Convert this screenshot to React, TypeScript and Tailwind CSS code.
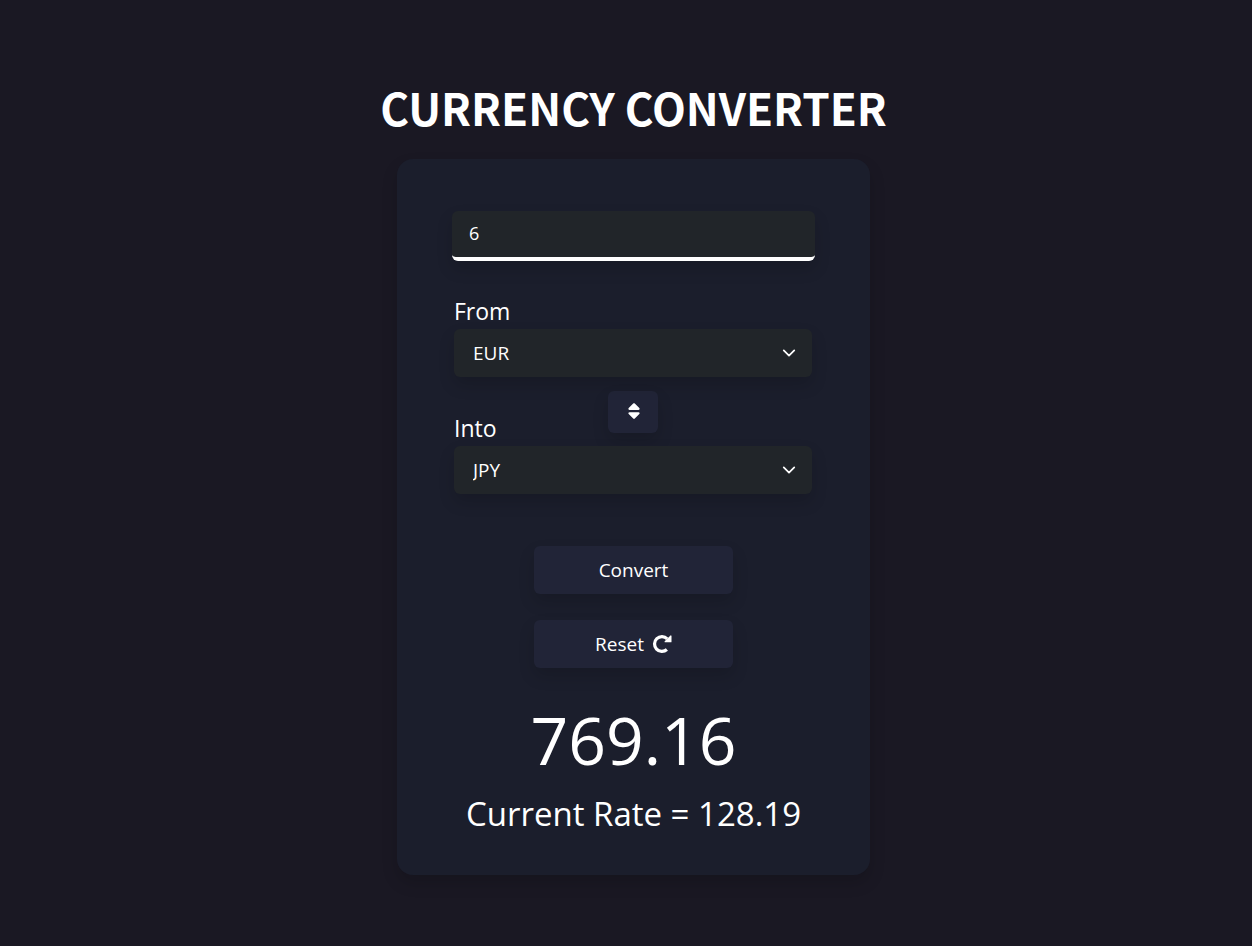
import { useState } from "react";
import { FaSort } from "react-icons/fa6";

const RATES: Record<string, number> = { EUR: 1, JPY: 128.19, USD: 1.13, GBP: 0.84 };
const CODES = Object.keys(RATES);

function Chevron() {
  return (
    <svg
      viewBox="0 0 16 16"
      className="pointer-events-none absolute right-4 size-3.5"
      fill="none"
      stroke="currentColor"
      strokeWidth="2"
      strokeLinecap="round"
      strokeLinejoin="round"
      aria-hidden="true"
    >
      <path d="M2 5l6 6 6-6" />
    </svg>
  );
}

function ResetIcon() {
  return (
    <svg viewBox="0 0 20 20" className="size-5" aria-hidden="true">
      <path
        d="M14.9 15.5A7.4 7.4 0 1 1 15.2 4.8"
        fill="none"
        stroke="currentColor"
        strokeWidth="3.2"
      />
      <path d="M19.5 2v5.8a.5.5 0 0 1-.5.5h-5.9a.6.6 0 0 1-.4-1l5.8-5.8a.6.6 0 0 1 1 .5z" fill="currentColor" />
    </svg>
  );
}

type CurrencySelectProps = {
  id: string;
  value: string;
  onChange: (code: string) => void;
};

function CurrencySelect({ id, value, onChange }: CurrencySelectProps) {
  return (
    <div className="relative flex items-center">
      <select
        id={id}
        value={value}
        onChange={(e) => onChange(e.target.value)}
        className="h-12 w-full appearance-none rounded-md bg-[#212529] px-[19px] text-[19px] text-white shadow-[0_8px_16px_rgba(0,0,0,0.15)] outline-none"
      >
        {CODES.map((code) => (
          <option key={code}>{code}</option>
        ))}
      </select>
      <Chevron />
    </div>
  );
}

const actionClass =
  "flex h-12 w-full items-center justify-center gap-2 rounded-md bg-[#212437] text-[19px] shadow-[0_8px_16px_rgba(0,0,0,0.15)]";

export default function App() {
  const [amount, setAmount] = useState("6");
  const [from, setFrom] = useState("EUR");
  const [into, setInto] = useState("JPY");
  const [result, setResult] = useState({ total: "769.16", rate: "128.19" });

  const convert = () => {
    const rate = RATES[into] / RATES[from];
    setResult({ total: (Number(amount) * rate).toFixed(2), rate: rate.toFixed(2) });
  };
  const swap = () => {
    setFrom(into);
    setInto(from);
  };
  const reset = () => {
    setAmount("");
    setResult({ total: "0.00", rate: "0.00" });
  };

  return (
    <main className="flex min-h-screen flex-col items-center bg-[#1a1823] pt-20 pb-[71px] pl-[15px] font-['Open_Sans',sans-serif] text-white">
      <h1 className="mb-[25px] text-center font-['Noto_Sans_CJK_JP',sans-serif] text-[44px] leading-[54px] font-bold">
        CURRENCY CONVERTER
      </h1>

      <section className="flex w-full max-w-[473px] flex-col items-center rounded-2xl bg-[#1b1e2c] px-[55px] pt-[52px] pb-9 shadow-[0_8px_16px_rgba(0,0,0,0.15)]">
        <input
          type="text"
          inputMode="decimal"
          aria-label="Amount"
          value={amount}
          onChange={(e) => setAmount(e.target.value)}
          className="h-[50px] w-full rounded-md border-b-4 border-white bg-[#212529] px-[17px] pb-0.5 text-lg shadow-[0_8px_16px_rgba(0,0,0,0.15)] outline-none"
        />

        <div className="mt-8 flex w-full flex-col pr-[3px] pl-0.5">
          <label htmlFor="from" className="text-[23px] leading-9">
            From
          </label>
          <CurrencySelect id="from" value={from} onChange={setFrom} />
          <div className="grid grid-cols-[1fr_50px_1fr] pt-3.5">
            <label htmlFor="into" className="self-end text-[23px] leading-9">
              Into
            </label>
            <button
              type="button"
              onClick={swap}
              aria-label="Swap currencies"
              className="mb-[13px] flex h-[42px] items-center justify-center rounded-md bg-[#212437] pb-0.5 pl-0.5 shadow-[0_8px_16px_rgba(0,0,0,0.15)]"
            >
              <FaSort className="size-[18px]" />
            </button>
          </div>
          <CurrencySelect id="into" value={into} onChange={setInto} />
        </div>

        <div className="mt-[52px] flex w-full max-w-[199px] flex-col gap-[26px]">
          <button type="button" onClick={convert} className={actionClass}>
            Convert
          </button>
          <button type="button" onClick={reset} className={actionClass}>
            Reset
            <ResetIcon />
          </button>
        </div>

        <output className="mt-[26px] text-[66px] leading-[90px]">{result.total}</output>
        <p className="mt-[5px] text-[33px] leading-[50px] whitespace-nowrap">
          Current Rate = {result.rate}
        </p>
      </section>
    </main>
  );
}
